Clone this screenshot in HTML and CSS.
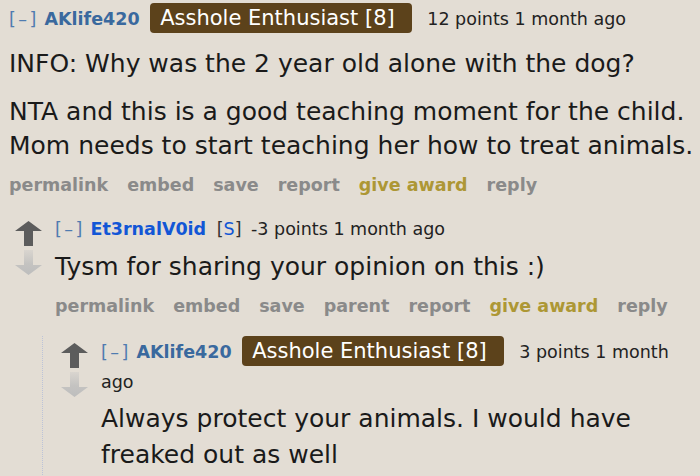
FILE: index.html
```html
<!DOCTYPE html>
<html lang="en">
<head>
<meta charset="utf-8">
<title>Comments</title>
<link rel="stylesheet" href="styles.css">
</head>
<body>
<div class="thread">
  <div class="comment root">
    <div class="entry">
      <p class="tagline"><a class="expand">[–]</a> <a class="author">AKlife420</a> <span class="flair">Asshole Enthusiast [8]</span> <span class="score">12 points</span> <time>1 month ago</time></p>
      <div class="md">
        <p>INFO: Why was the 2 year old alone with the dog?</p>
        <p>NTA and this is a good teaching moment for the child. Mom needs to start teaching her how to treat animals.</p>
      </div>
      <ul class="buttons">
        <li>permalink</li><li>embed</li><li>save</li><li>report</li><li class="award">give award</li><li>reply</li>
      </ul>
    </div>
    <div class="child">
      <div class="comment">
        <div class="row">
          <div class="votes">
            <svg class="arrow" width="27" height="25" viewBox="0 0 27 25"><path d="M13.5 0 L27 10 H18 V25 H9 V10 H0 Z" fill="#5c5c5c"/></svg>
            <svg class="arrow" width="27" height="25" viewBox="0 0 27 25"><defs><linearGradient id="dg1" x1="0" y1="0" x2="0" y2="1"><stop offset="0" stop-color="#d9d5cf"/><stop offset="0.55" stop-color="#c4c3c1"/><stop offset="1" stop-color="#bdbdbd"/></linearGradient></defs><path d="M9 0 H18 V15 H27 L13.5 25 L0 15 H9 Z" fill="url(#dg1)"/></svg>
          </div>
          <div class="entry">
            <p class="tagline"><a class="expand">[–]</a> <a class="author submitter">Et3rnalV0id</a> <span class="op">[<span class="s">S</span>]</span> <span class="score">-3 points</span> <time>1 month ago</time></p>
            <div class="md">
              <p>Tysm for sharing your opinion on this :)</p>
            </div>
            <ul class="buttons">
              <li>permalink</li><li>embed</li><li>save</li><li>parent</li><li>report</li><li class="award">give award</li><li>reply</li>
            </ul>
          </div>
        </div>
        <div class="child dotted">
          <div class="comment">
            <div class="row">
              <div class="votes">
                <svg class="arrow" width="27" height="25" viewBox="0 0 27 25"><path d="M13.5 0 L27 10 H18 V25 H9 V10 H0 Z" fill="#5c5c5c"/></svg>
                <svg class="arrow" width="27" height="25" viewBox="0 0 27 25"><defs><linearGradient id="dg2" x1="0" y1="0" x2="0" y2="1"><stop offset="0" stop-color="#d9d5cf"/><stop offset="0.55" stop-color="#c4c3c1"/><stop offset="1" stop-color="#bdbdbd"/></linearGradient></defs><path d="M9 0 H18 V15 H27 L13.5 25 L0 15 H9 Z" fill="url(#dg2)"/></svg>
              </div>
              <div class="entry">
                <p class="tagline"><a class="expand">[–]</a> <a class="author">AKlife420</a> <span class="flair">Asshole Enthusiast [8]</span> <span class="score">3 points</span> <time>1 month ago</time></p>
                <div class="md">
                  <p>Always protect your animals. I would have freaked out as well</p>
                </div>
              </div>
            </div>
          </div>
        </div>
      </div>
    </div>
  </div>
</div>
</body>
</html>
```

FILE: styles.css
```css
body {
  margin: 0;
  background: #e3ddd4;
  font-family: "DejaVu Sans", Verdana, sans-serif;
  color: #222;
}

.thread {
  padding: 3px 0 0 9px;
}

.tagline {
  margin: 0;
  font-size: 17.5px;
  line-height: 30px;
  color: #222;
}

.expand {
  color: #4f7bb0;
  letter-spacing: 2.5px;
}

.author {
  color: #3a699e;
  font-weight: bold;
}

.author.submitter {
  color: #1256d6;
}

.op {
  color: #333;
  margin-left: 5px;
  margin-right: 4px;
}

.op .s {
  color: #1256d6;
}

.flair {
  display: inline-block;
  background: #5c421b;
  color: #fff;
  font-size: 21px;
  line-height: normal;
  padding: 3px 17px 3px 10px;
  border-radius: 4px;
  margin: 0 10px 0 5px;
}

.md {
  margin-top: 6px;
  font-size: 25px;
  line-height: 34px;
  color: #1a1a1a;
}

.root > .entry > .md {
  margin-top: 13px;
}

.dotted .md {
  margin-top: 4px;
  line-height: 36px;
}

.md p {
  margin: 0 0 14px;
}

.md p:last-child {
  margin-bottom: 0;
}

.buttons {
  display: flex;
  gap: 19px;
  margin: 10px 0 0;
  padding: 0;
  list-style: none;
  font-size: 17.5px;
  font-weight: bold;
  line-height: 24px;
  color: #8a8a8a;
}

.buttons .award {
  color: #ad9735;
}

.child {
  margin-top: 17px;
  margin-left: 6px;
}

.child.dotted {
  margin-top: 18px;
  margin-left: 27px;
  padding-left: 18px;
  padding-bottom: 40px;
  border-left: 1px dotted #bcc3d8;
}

.row {
  display: flex;
}

.votes {
  flex: none;
  width: 40px;
  padding-top: 7px;
  display: flex;
  flex-direction: column;
  gap: 4px;
}

.arrow {
  display: block;
}

.entry {
  flex: 1;
  min-width: 0;
}
```
